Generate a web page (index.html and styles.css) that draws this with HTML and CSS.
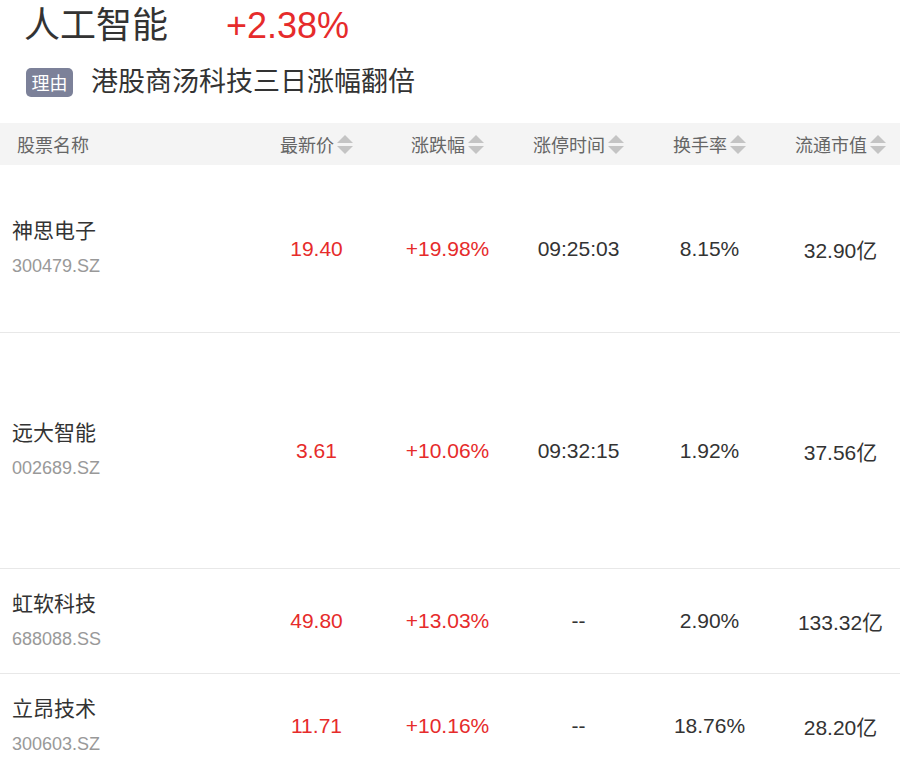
FILE: index.html
```html
<!DOCTYPE html>
<html lang="zh-CN">
<head>
<meta charset="utf-8">
<title>人工智能</title>
<link rel="stylesheet" href="styles.css">
</head>
<body>
<div class="page">
  <div class="title-row">
    <span class="title">人工智能</span>
    <span class="title-pct">+2.38%</span>
  </div>
  <div class="reason-row">
    <span class="tag">理由</span>
    <span class="reason">港股商汤科技三日涨幅翻倍</span>
  </div>

  <div class="table">
    <div class="thead">
      <div class="th th-name">股票名称</div>
      <div class="th">最新价<svg class="sort" viewBox="0 0 16 20"><polygon points="0,9 8,1 16,9"/><polygon points="0,12 8,20 16,12"/></svg></div>
      <div class="th">涨跌幅<svg class="sort" viewBox="0 0 16 20"><polygon points="0,9 8,1 16,9"/><polygon points="0,12 8,20 16,12"/></svg></div>
      <div class="th">涨停时间<svg class="sort" viewBox="0 0 16 20"><polygon points="0,9 8,1 16,9"/><polygon points="0,12 8,20 16,12"/></svg></div>
      <div class="th">换手率<svg class="sort" viewBox="0 0 16 20"><polygon points="0,9 8,1 16,9"/><polygon points="0,12 8,20 16,12"/></svg></div>
      <div class="th">流通市值<svg class="sort" viewBox="0 0 16 20"><polygon points="0,9 8,1 16,9"/><polygon points="0,12 8,20 16,12"/></svg></div>
    </div>

    <div class="tr tr-168">
      <div class="td td-name"><div class="name">神思电子</div><div class="code">300479.SZ</div></div>
      <div class="td up">19.40</div>
      <div class="td up">+19.98%</div>
      <div class="td">09:25:03</div>
      <div class="td">8.15%</div>
      <div class="td">32.90亿</div>
    </div>

    <div class="tr tr-236">
      <div class="td td-name"><div class="name">远大智能</div><div class="code">002689.SZ</div></div>
      <div class="td up">3.61</div>
      <div class="td up">+10.06%</div>
      <div class="td">09:32:15</div>
      <div class="td">1.92%</div>
      <div class="td">37.56亿</div>
    </div>

    <div class="tr tr-105">
      <div class="td td-name"><div class="name">虹软科技</div><div class="code">688088.SS</div></div>
      <div class="td up">49.80</div>
      <div class="td up">+13.03%</div>
      <div class="td">--</div>
      <div class="td">2.90%</div>
      <div class="td">133.32亿</div>
    </div>

    <div class="tr tr-105">
      <div class="td td-name"><div class="name">立昂技术</div><div class="code">300603.SZ</div></div>
      <div class="td up">11.71</div>
      <div class="td up">+10.16%</div>
      <div class="td">--</div>
      <div class="td">18.76%</div>
      <div class="td">28.20亿</div>
    </div>
  </div>
</div>
</body>
</html>
```

FILE: styles.css
```css
html, body {
  margin: 0;
  padding: 0;
  background: #ffffff;
  overflow: hidden;
}

body {
  font-family: "Liberation Sans", Arial, "Noto Sans CJK SC", sans-serif;
  color: #333333;
}

.page {
  width: 906px;
}

.title-row {
  display: flex;
  align-items: center;
  height: 52px;
  padding-left: 24px;
}

.title {
  font-size: 36px;
  line-height: 52px;
  color: #333333;
}

.title-pct {
  margin-left: 58px;
  font-size: 36px;
  line-height: 52px;
  color: #e62b2b;
}

.reason-row {
  display: flex;
  align-items: center;
  height: 44px;
  margin-top: 8px;
  margin-bottom: 19px;
  padding-left: 26px;
}

.tag {
  display: inline-flex;
  align-items: center;
  justify-content: center;
  width: 47px;
  height: 29px;
  border-radius: 5px;
  background: #7c8199;
  color: #ffffff;
  font-size: 18px;
}

.reason {
  margin-left: 18px;
  font-size: 27px;
  line-height: 44px;
  color: #333333;
}

.thead,
.tr {
  display: grid;
  grid-template-columns: 251px repeat(5, 131px);
}

.thead {
  height: 42px;
  background: #f4f4f4;
}

.th {
  display: flex;
  align-items: center;
  justify-content: center;
  font-size: 18px;
  color: #666666;
}

.th-name {
  justify-content: flex-start;
  padding-left: 17px;
}

.sort {
  width: 16px;
  height: 20px;
  margin-left: 3px;
  fill: #c4c4c4;
}

.tr {
  border-bottom: 1px solid #e8e8e8;
  box-sizing: border-box;
}

.tr-168 { height: 168px; }
.tr-236 { height: 236px; }
.tr-105 { height: 105px; }

.td {
  display: flex;
  align-items: center;
  justify-content: center;
  font-size: 21px;
  color: #333333;
}

.td.up {
  color: #e62b2b;
}

.td-name {
  flex-direction: column;
  align-items: flex-start;
  justify-content: center;
  padding-left: 12px;
}

.name {
  font-size: 21px;
  line-height: 32px;
  color: #333333;
}

.code {
  margin-top: 3px;
  font-size: 18px;
  line-height: 32px;
  color: #999999;
}
```
